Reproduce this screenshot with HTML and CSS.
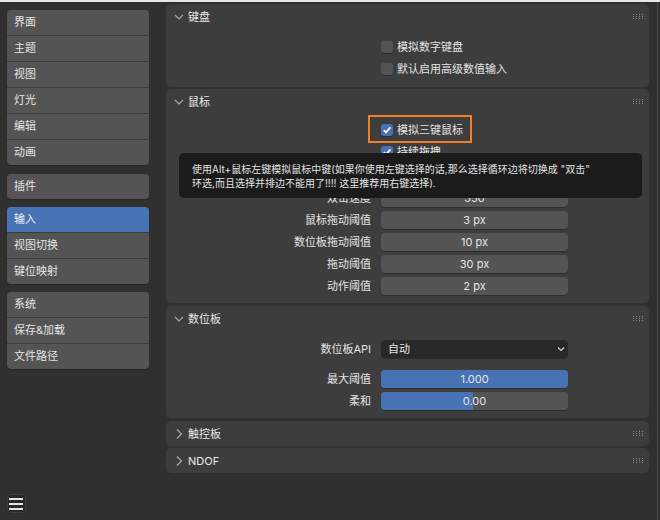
FILE: index.html
```html
<!DOCTYPE html>
<html lang="zh-CN">
<head>
<meta charset="utf-8">
<title>偏好设置 - 输入</title>
<link rel="stylesheet" href="styles.css">
</head>
<body>
<div class="topstrip"></div>
<div class="app">
  <nav class="sidebar">
    <div class="group first">
      <div class="item">界面</div>
      <div class="item">主题</div>
      <div class="item">视图</div>
      <div class="item">灯光</div>
      <div class="item">编辑</div>
      <div class="item">动画</div>
    </div>
    <div class="group">
      <div class="item">插件</div>
    </div>
    <div class="group">
      <div class="item active">输入</div>
      <div class="item">视图切换</div>
      <div class="item">键位映射</div>
    </div>
    <div class="group">
      <div class="item">系统</div>
      <div class="item">保存&amp;加载</div>
      <div class="item">文件路径</div>
    </div>
    <div class="menu-btn">
      <svg viewBox="0 0 17 17" width="17" height="17"><rect x="1" y="3" width="14" height="2" fill="#e2e2e2"/><rect x="1" y="8" width="14" height="2" fill="#e2e2e2"/><rect x="1" y="13" width="14" height="2" fill="#e2e2e2"/></svg>
    </div>
  </nav>

  <main class="main">
    <section class="panel">
      <div class="panel-head">
        <svg class="chev" viewBox="0 0 10 10"><path d="M1 3 L5 7 L9 3" fill="none" stroke="#a9a9a9" stroke-width="1.2"/></svg>
        <span class="title">键盘</span>
        <svg class="grip" viewBox="0 0 10 5"><g fill="#8a8a8a"><rect x="0" y="0" width="1" height="1"/><rect x="3" y="0" width="1" height="1"/><rect x="6" y="0" width="1" height="1"/><rect x="9" y="0" width="1" height="1"/><rect x="0" y="2" width="1" height="1"/><rect x="3" y="2" width="1" height="1"/><rect x="6" y="2" width="1" height="1"/><rect x="9" y="2" width="1" height="1"/><rect x="0" y="4" width="1" height="1"/><rect x="3" y="4" width="1" height="1"/><rect x="6" y="4" width="1" height="1"/><rect x="9" y="4" width="1" height="1"/></g></svg>
      </div>
      <div class="panel-body body-kbd">
        <div class="row"><div class="lbl"></div><div class="val"><span class="check"><span class="box"></span>模拟数字键盘</span></div></div>
        <div class="row"><div class="lbl"></div><div class="val"><span class="check"><span class="box"></span>默认启用高级数值输入</span></div></div>
      </div>
    </section>

    <section class="panel">
      <div class="panel-head">
        <svg class="chev" viewBox="0 0 10 10"><path d="M1 3 L5 7 L9 3" fill="none" stroke="#a9a9a9" stroke-width="1.2"/></svg>
        <span class="title">鼠标</span>
        <svg class="grip" viewBox="0 0 10 5"><g fill="#8a8a8a"><rect x="0" y="0" width="1" height="1"/><rect x="3" y="0" width="1" height="1"/><rect x="6" y="0" width="1" height="1"/><rect x="9" y="0" width="1" height="1"/><rect x="0" y="2" width="1" height="1"/><rect x="3" y="2" width="1" height="1"/><rect x="6" y="2" width="1" height="1"/><rect x="9" y="2" width="1" height="1"/><rect x="0" y="4" width="1" height="1"/><rect x="3" y="4" width="1" height="1"/><rect x="6" y="4" width="1" height="1"/><rect x="9" y="4" width="1" height="1"/></g></svg>
      </div>
      <div class="panel-body body-mouse">
        <div class="row"><div class="lbl"></div><div class="val"><span class="check hl"><span class="box on"><svg viewBox="0 0 12 12"><path d="M2.8 6.2 L5 8.4 L9.4 3.4" fill="none" stroke="#fff" stroke-width="1.7"/></svg></span>模拟三键鼠标</span></div></div>
        <div class="row"><div class="lbl"></div><div class="val"><span class="check"><span class="box on"><svg viewBox="0 0 12 12"><path d="M2.8 6.2 L5 8.4 L9.4 3.4" fill="none" stroke="#fff" stroke-width="1.7"/></svg></span>持续拖拽</span></div></div>
        <div class="row"><div class="lbl"></div><div class="val"><span class="check"><span class="box"></span></span></div></div>
        <div class="row gap1"><div class="lbl">双击速度</div><div class="val"><div class="field">350</div></div></div>
        <div class="row"><div class="lbl">鼠标拖动阈值</div><div class="val"><div class="field">3 px</div></div></div>
        <div class="row"><div class="lbl">数位板拖动阈值</div><div class="val"><div class="field">10 px</div></div></div>
        <div class="row"><div class="lbl">拖动阈值</div><div class="val"><div class="field">30 px</div></div></div>
        <div class="row"><div class="lbl">动作阈值</div><div class="val"><div class="field">2 px</div></div></div>
      </div>
      <div class="tooltip">使用Alt+鼠标左键模拟鼠标中键(如果你使用左键选择的话,那么选择循环边将切换成 "双击"<br>环选,而且选择并排边不能用了!!!! 这里推荐用右键选择).</div>
    </section>

    <section class="panel shift">
      <div class="panel-head">
        <svg class="chev" viewBox="0 0 10 10"><path d="M1 3 L5 7 L9 3" fill="none" stroke="#a9a9a9" stroke-width="1.2"/></svg>
        <span class="title">数位板</span>
        <svg class="grip" viewBox="0 0 10 5"><g fill="#8a8a8a"><rect x="0" y="0" width="1" height="1"/><rect x="3" y="0" width="1" height="1"/><rect x="6" y="0" width="1" height="1"/><rect x="9" y="0" width="1" height="1"/><rect x="0" y="2" width="1" height="1"/><rect x="3" y="2" width="1" height="1"/><rect x="6" y="2" width="1" height="1"/><rect x="9" y="2" width="1" height="1"/><rect x="0" y="4" width="1" height="1"/><rect x="3" y="4" width="1" height="1"/><rect x="6" y="4" width="1" height="1"/><rect x="9" y="4" width="1" height="1"/></g></svg>
      </div>
      <div class="panel-body body-tablet">
        <div class="row"><div class="lbl">数位板API</div><div class="val"><div class="dropdown"><span>自动</span><svg viewBox="0 0 8 6" width="8" height="6"><path d="M1 1.5 L4 4.5 L7 1.5" fill="none" stroke="#d0d0d0" stroke-width="1.2"/></svg></div></div></div>
        <div class="row gap8"><div class="lbl">最大阈值</div><div class="val"><div class="field slider"><div class="fill" style="width:100%"></div><span>1.000</span></div></div></div>
        <div class="row"><div class="lbl">柔和</div><div class="val"><div class="field slider"><div class="fill" style="width:49%"></div><span>0.00</span></div></div></div>
      </div>
    </section>

    <section class="panel shift">
      <div class="panel-head">
        <svg class="chev" viewBox="0 0 10 10"><path d="M3 0.5 L7.5 5 L3 9.5" fill="none" stroke="#a9a9a9" stroke-width="1.2"/></svg>
        <span class="title">触控板</span>
        <svg class="grip" viewBox="0 0 10 5"><g fill="#8a8a8a"><rect x="0" y="0" width="1" height="1"/><rect x="3" y="0" width="1" height="1"/><rect x="6" y="0" width="1" height="1"/><rect x="9" y="0" width="1" height="1"/><rect x="0" y="2" width="1" height="1"/><rect x="3" y="2" width="1" height="1"/><rect x="6" y="2" width="1" height="1"/><rect x="9" y="2" width="1" height="1"/><rect x="0" y="4" width="1" height="1"/><rect x="3" y="4" width="1" height="1"/><rect x="6" y="4" width="1" height="1"/><rect x="9" y="4" width="1" height="1"/></g></svg>
      </div>
    </section>

    <section class="panel">
      <div class="panel-head">
        <svg class="chev" viewBox="0 0 10 10"><path d="M3 0.5 L7.5 5 L3 9.5" fill="none" stroke="#a9a9a9" stroke-width="1.2"/></svg>
        <span class="title">NDOF</span>
        <svg class="grip" viewBox="0 0 10 5"><g fill="#8a8a8a"><rect x="0" y="0" width="1" height="1"/><rect x="3" y="0" width="1" height="1"/><rect x="6" y="0" width="1" height="1"/><rect x="9" y="0" width="1" height="1"/><rect x="0" y="2" width="1" height="1"/><rect x="3" y="2" width="1" height="1"/><rect x="6" y="2" width="1" height="1"/><rect x="9" y="2" width="1" height="1"/><rect x="0" y="4" width="1" height="1"/><rect x="3" y="4" width="1" height="1"/><rect x="6" y="4" width="1" height="1"/><rect x="9" y="4" width="1" height="1"/></g></svg>
      </div>
    </section>
  </main>
  <div class="scrolltrack"></div>
</div>
</body>
</html>
```

FILE: styles.css
```css
* { box-sizing: border-box; }
html, body { margin: 0; padding: 0; }
body {
  width: 660px;
  height: 520px;
  overflow: hidden;
  background: #303030;
  font-family: "Inter", "Noto Sans CJK SC", sans-serif;
  font-size: 11px;
  color: #e4e4e4;
}
.topstrip { height: 2px; background: #e6e6e6; }
.app { display: flex; height: 518px; }

/* sidebar */
.sidebar {
  width: 166px;
  flex: none;
  padding: 8px 0 7px 7px;
  display: flex;
  flex-direction: column;
  gap: 8px;
}
.group {
  width: 142px;
  background: #545454;
  border-radius: 4px;
  overflow: hidden;
  box-shadow: 0 1px 1px rgba(0,0,0,0.25);
}
.group.first { margin-bottom: 1px; }
.item {
  height: 26px;
  line-height: 25px;
  padding-left: 7px;
  border-top: 1px solid #3b3b3b;
}
.item:first-child { height: 25px; border-top: 0; }
.item.active { background: #4772b3; color: #f2f2f2; }
.menu-btn {
  margin-top: auto;
  width: 19px;
  height: 19px;
  background: #282828;
  border: 1px solid #3e3e3e;
  border-radius: 4px;
  display: flex;
  align-items: center;
  justify-content: center;
}
.menu-btn svg { display: block; }

/* main */
.main {
  width: 483px;
  flex: none;
  padding-top: 2px;
  display: flex;
  flex-direction: column;
  gap: 2px;
}
.scrolltrack { margin-left: 8px; width: 1px; background: #4a4a4a; }
.panel {
  background: #3d3d3d;
  border-radius: 5px;
  position: relative;
}
.panel.shift { margin-top: 1px; }
.panel-head {
  height: 25px;
  display: flex;
  align-items: center;
  padding: 0 6px 0 8px;
}
.chev { width: 10px; height: 10px; margin-right: 4px; flex: none; }
.title { flex: 1; line-height: 14px; color: #e8e8e8; }
.grip { width: 10px; height: 5px; flex: none; }

.body-kbd { padding: 8px 0 6px; }
.body-mouse { padding: 6px 0 6px; }
.body-tablet { padding: 7px 0 6px; }

.row { display: flex; align-items: center; height: 22px; }
.row.gap1 { margin-top: 1px; }
.row.gap8 { margin-top: 8px; }
.lbl {
  width: 215px;
  flex: none;
  padding-right: 10px;
  text-align: right;
  line-height: 14px;
}
.val { width: 187px; flex: none; }

.check {
  display: inline-flex;
  align-items: center;
  gap: 4px;
  height: 12px;
  line-height: 12px;
  position: relative;
}
.check.hl::before {
  content: "";
  position: absolute;
  left: -13px;
  right: -9px;
  top: -9px;
  bottom: -7px;
  border: 2px solid #ef7f2b;
}
.box {
  width: 12px;
  height: 12px;
  border-radius: 3px;
  background: #545454;
  box-shadow: 0 1px 0 rgba(0,0,0,0.3);
  flex: none;
}
.box.on { background: #4772b3; }
.box svg { display: block; width: 12px; height: 12px; }

.field {
  height: 18px;
  line-height: 18px;
  border-radius: 4px;
  background: #545454;
  text-align: center;
  box-shadow: 0 1px 0 rgba(0,0,0,0.25);
}
.slider { position: relative; overflow: hidden; }
.slider .fill {
  position: absolute;
  left: 0; top: 0; bottom: 0;
  background: #4772b3;
}
.slider span { position: relative; }
.dropdown {
  height: 18px;
  border-radius: 4px;
  background: #282828;
  display: flex;
  align-items: center;
  justify-content: space-between;
  padding: 0 3px 0 7px;
  line-height: 18px;
  box-shadow: 0 1px 0 rgba(0,0,0,0.25);
}
.dropdown svg { display: block; }

.tooltip {
  position: absolute;
  left: 13px;
  top: 64px;
  width: 463px;
  height: 45px;
  background: #1b1b1b;
  border-radius: 5px;
  padding: 10px 13px 0;
  font-size: 10px;
  line-height: 13.5px;
  color: #e2e2e2;
  white-space: nowrap;
}
```
